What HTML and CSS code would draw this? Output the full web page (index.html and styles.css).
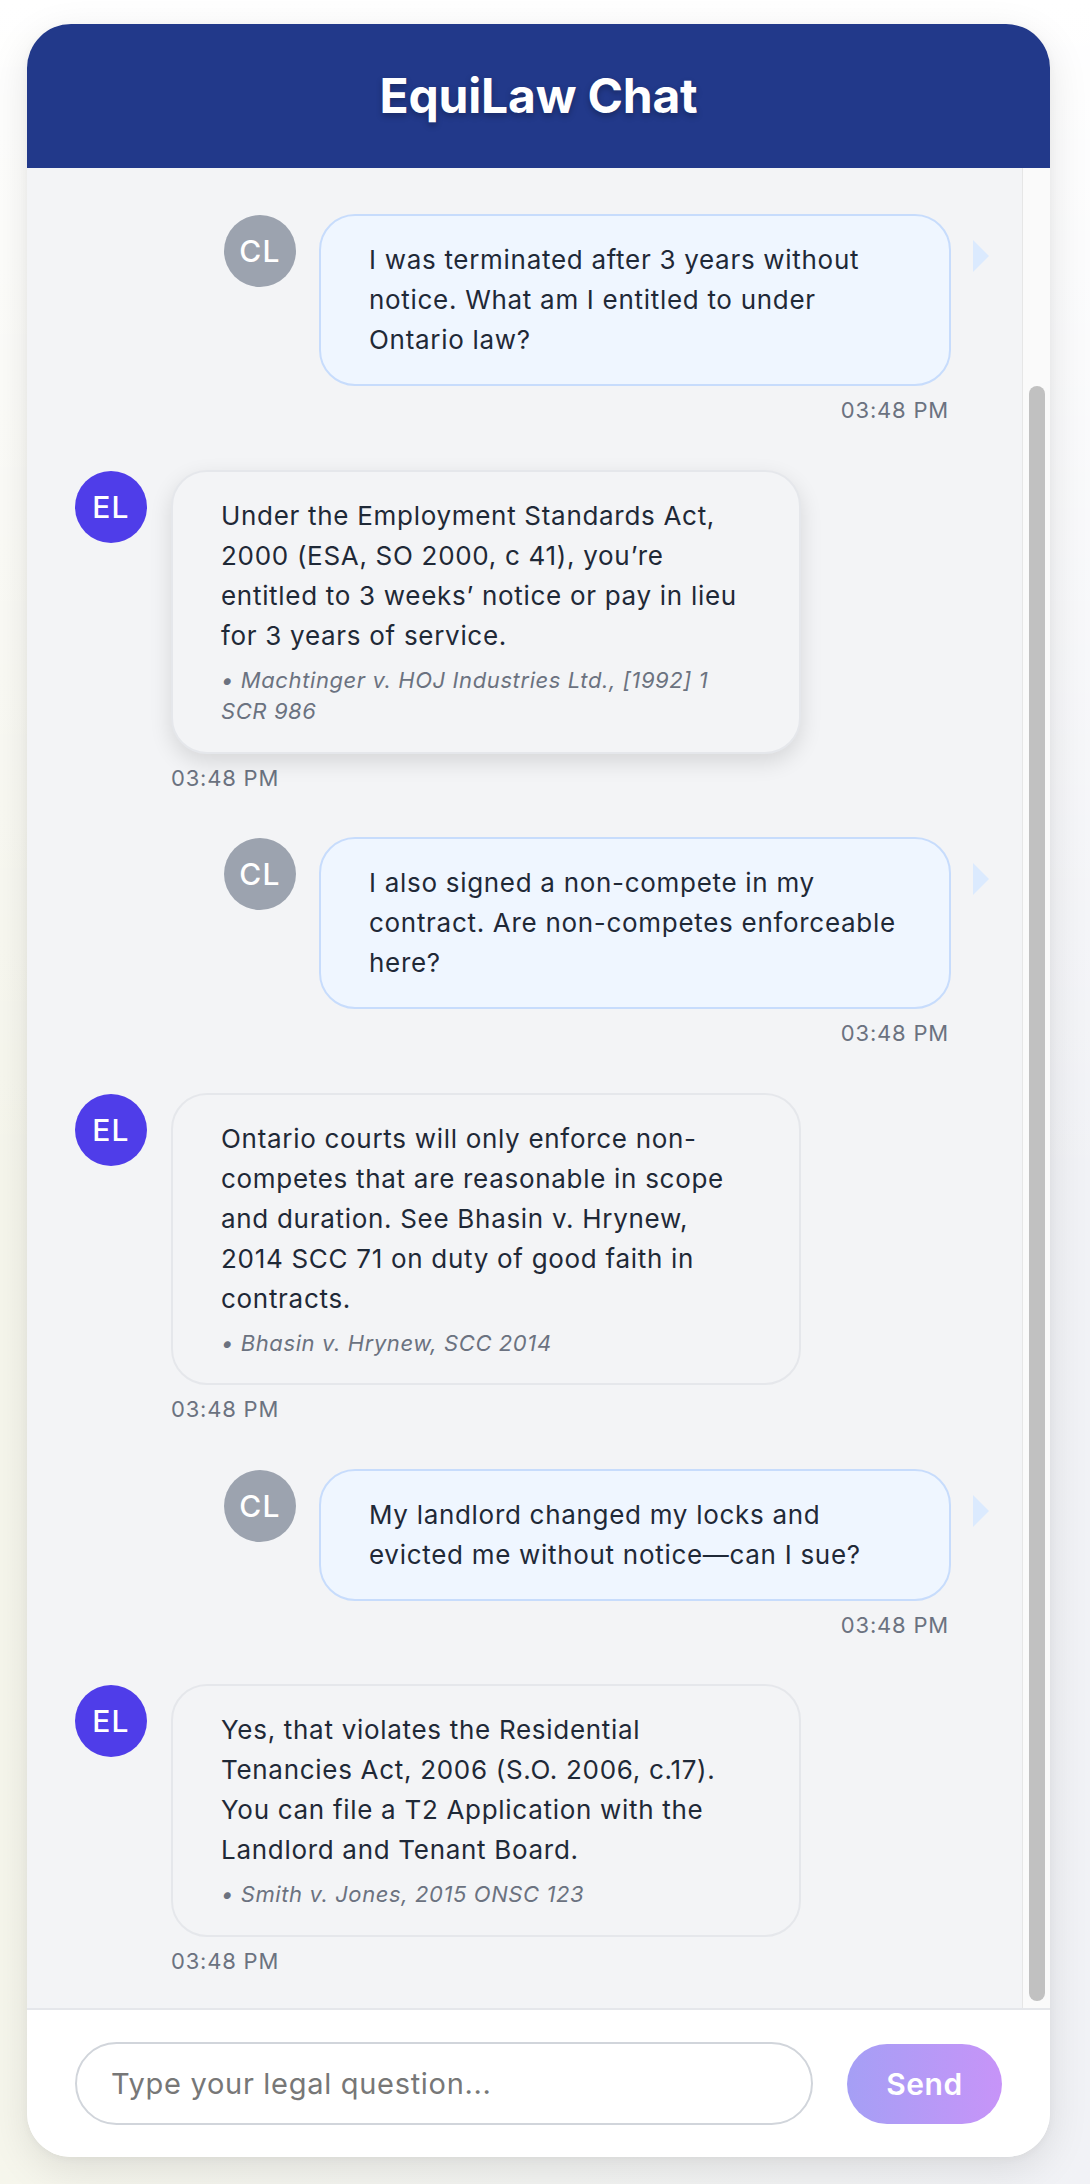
FILE: index.html
```html
<!DOCTYPE html>
<html lang="en">
<head>
<meta charset="utf-8">
<title>EquiLaw Chat</title>
<link rel="stylesheet" href="styles.css">
</head>
<body>
<div class="chat">
  <header class="chat-header">
    <h1 class="chat-title">EquiLaw Chat</h1>
  </header>

  <div class="chat-body">
    <div class="messages">

      <div class="msg msg-user">
        <div class="avatar avatar-user">CL</div>
        <div class="msg-body">
          <div class="bubble bubble-user">
            <p class="bubble-text">I was terminated after 3 years without notice. What am I entitled to under Ontario law?</p>
          </div>
          <div class="time time-right">03:48 PM</div>
        </div>
      </div>

      <div class="msg msg-bot">
        <div class="avatar avatar-bot">EL</div>
        <div class="msg-body">
          <div class="bubble bubble-bot bubble-raised">
            <p class="bubble-text">Under the Employment Standards Act, 2000 (ESA, SO 2000, c 41), you’re entitled to 3 weeks’ notice or pay in lieu for 3 years of service.</p>
            <p class="citation">• Machtinger v. HOJ Industries Ltd., [1992] 1 SCR 986</p>
          </div>
          <div class="time">03:48 PM</div>
        </div>
      </div>

      <div class="msg msg-user">
        <div class="avatar avatar-user">CL</div>
        <div class="msg-body">
          <div class="bubble bubble-user">
            <p class="bubble-text">I also signed a non-compete in my contract. Are non-competes enforceable here?</p>
          </div>
          <div class="time time-right">03:48 PM</div>
        </div>
      </div>

      <div class="msg msg-bot">
        <div class="avatar avatar-bot">EL</div>
        <div class="msg-body">
          <div class="bubble bubble-bot">
            <p class="bubble-text">Ontario courts will only enforce non-competes that are reasonable in scope and duration. See Bhasin v. Hrynew, 2014 SCC 71 on duty of good faith in contracts.</p>
            <p class="citation">• Bhasin v. Hrynew, SCC 2014</p>
          </div>
          <div class="time">03:48 PM</div>
        </div>
      </div>

      <div class="msg msg-user">
        <div class="avatar avatar-user">CL</div>
        <div class="msg-body">
          <div class="bubble bubble-user">
            <p class="bubble-text">My landlord changed my locks and evicted me without notice—can I sue?</p>
          </div>
          <div class="time time-right">03:48 PM</div>
        </div>
      </div>

      <div class="msg msg-bot">
        <div class="avatar avatar-bot">EL</div>
        <div class="msg-body">
          <div class="bubble bubble-bot">
            <p class="bubble-text">Yes, that violates the Residential Tenancies Act, 2006 (S.O. 2006, c.17). You can file a T2 Application with the Landlord and Tenant Board.</p>
            <p class="citation">• Smith v. Jones, 2015 ONSC 123</p>
          </div>
          <div class="time">03:48 PM</div>
        </div>
      </div>

    </div>
    <div class="scrollbar" aria-hidden="true">
      <div class="scrollbar-thumb"></div>
    </div>
  </div>

  <form class="composer" onsubmit="return false;">
    <input class="composer-input" type="text" placeholder="Type your legal question...">
    <button class="composer-send" type="submit">Send</button>
  </form>
</div>
</body>
</html>
```

FILE: styles.css
```css
* {
  box-sizing: border-box;
}

html, body {
  margin: 0;
  padding: 0;
}

body {
  font-family: Inter, "Noto Sans", "Liberation Sans", sans-serif;
  color: #1f2937;
  min-height: 2184px;
  background:
    linear-gradient(to bottom, #ffffff 0%, rgba(255, 255, 255, 0) 55%),
    linear-gradient(to right, #f6f6ec 0%, #f3f4f2 50%, #f1f2f6 100%);
  padding: 24px 0 0 27px;
}

.chat {
  width: 1023px;
  height: 2133px;
  display: flex;
  flex-direction: column;
  background: #ffffff;
  border-radius: 44px;
  overflow: hidden;
  box-shadow: 0 12px 40px rgba(0, 0, 0, 0.10), 0 2px 8px rgba(0, 0, 0, 0.04);
}

.chat-header {
  height: 144px;
  flex: none;
  background: #22398a;
  display: flex;
  align-items: center;
  justify-content: center;
}

.chat-title {
  margin: 0;
  color: #ffffff;
  font-size: 48px;
  font-weight: 700;
  line-height: 1;
  letter-spacing: -0.2px;
  text-shadow: 0 3px 6px rgba(0, 0, 0, 0.28);
}

.chat-body {
  flex: 1;
  min-height: 0;
  display: flex;
  background: #f3f4f6;
}

.messages {
  flex: 1;
  min-width: 0;
  overflow-y: auto;
  scrollbar-width: none;
  display: flex;
  flex-direction: column;
  gap: 43.5px;
  padding: 46px 48px 32px 48px;
}

.scrollbar {
  flex: none;
  width: 28px;
  background: #fafafa;
  border-left: 1px solid #e6e6e6;
  padding: 218px 5px 7px 6px;
}

.scrollbar-thumb {
  height: 100%;
  background: #c1c1c1;
  border-radius: 8px;
}

.msg {
  display: flex;
  align-items: flex-start;
  gap: 24px;
}

.msg-user {
  justify-content: flex-end;
  padding-right: 23px;
  gap: 23px;
}

.avatar {
  flex: none;
  width: 72px;
  height: 72px;
  margin-top: 1px;
  border-radius: 50%;
  display: flex;
  align-items: center;
  justify-content: center;
  color: #ffffff;
  font-size: 30px;
  font-weight: 500;
  letter-spacing: 1.2px;
}

.avatar-user {
  background: #9ca3af;
}

.avatar-bot {
  background: #4f3de9;
}

.msg-body {
  display: flex;
  flex-direction: column;
}

.bubble {
  position: relative;
  width: 632px;
  padding: 24px 48px;
  border-radius: 36px;
  border: 2px solid transparent;
}

.bubble-user {
  background: #eff6ff;
  border-color: #c7dcfc;
}

.bubble-user::after {
  content: "";
  position: absolute;
  top: 24px;
  right: -40px;
  width: 0;
  height: 0;
  border-top: 16px solid transparent;
  border-bottom: 16px solid transparent;
  border-left: 16px solid #dbeafe;
}

.bubble-bot {
  width: 630px;
  background: #f3f4f6;
  border-color: #e5e7eb;
}

.bubble-raised {
  box-shadow: 0 8px 22px rgba(0, 0, 0, 0.12);
}

.bubble-text {
  margin: 0;
  font-size: 26px;
  line-height: 40px;
  letter-spacing: 0.7px;
  color: #1f2937;
}

.citation {
  margin: 9px 0 0;
  font-size: 22px;
  line-height: 31.5px;
  letter-spacing: 0.6px;
  font-style: italic;
  color: #6b7280;
}

.time {
  margin-top: 8px;
  font-size: 22px;
  line-height: 32px;
  letter-spacing: 0.8px;
  color: #6b7280;
}

.time-right {
  text-align: right;
  padding-right: 2px;
}

.composer {
  flex: none;
  margin: 0;
  display: flex;
  align-items: center;
  gap: 34px;
  padding: 32px 48px;
  border-top: 2px solid #e5e7eb;
  background: #ffffff;
}

.composer-input {
  flex: 1;
  min-width: 0;
  height: 83px;
  border: 2px solid #d1d5db;
  border-radius: 999px;
  padding: 0 34px;
  font-family: Inter, "Noto Sans", "Liberation Sans", sans-serif;
  font-size: 29px;
  letter-spacing: 0.7px;
  color: #1f2937;
  background: #ffffff;
  outline: none;
}

.composer-input::placeholder {
  color: #777777;
}

.composer-send {
  flex: none;
  width: 155px;
  height: 80px;
  border: none;
  border-radius: 40px;
  background: linear-gradient(90deg, #a59ff5 0%, #c794f8 100%);
  color: #ffffff;
  font-family: Inter, "Noto Sans", "Liberation Sans", sans-serif;
  font-size: 30px;
  font-weight: 600;
  letter-spacing: 0.5px;
  cursor: pointer;
}
```
